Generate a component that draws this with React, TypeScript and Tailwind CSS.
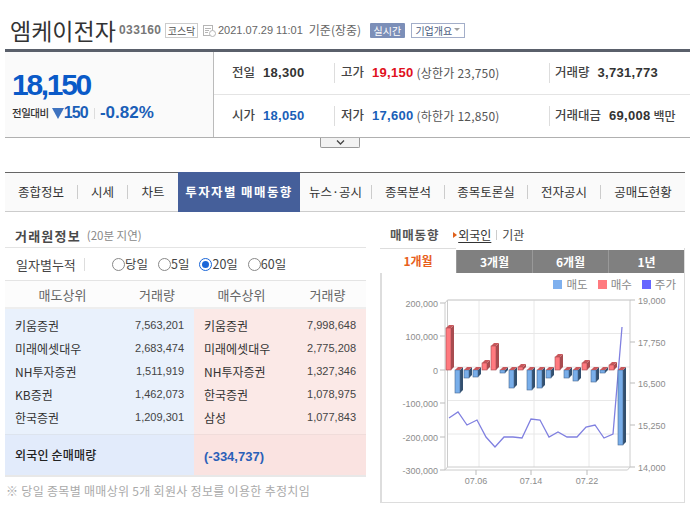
import React from 'react';

const KR = "font-['Noto_Sans_CJK_KR','Noto_Sans',sans-serif]";
const NUM = "font-['Liberation_Sans',Arial,sans-serif]";

const tabs = ['종합정보', '시세', '차트', '투자자별 매매동향', '뉴스·공시', '종목분석', '종목토론실', '전자공시', '공매도현황'];

const sellers = [
  ['키움증권', '7,563,201'],
  ['미래에셋대우', '2,683,474'],
  ['NH투자증권', '1,511,919'],
  ['KB증권', '1,462,073'],
  ['한국증권', '1,209,301'],
];
const buyers = [
  ['키움증권', '7,998,648'],
  ['미래에셋대우', '2,775,208'],
  ['NH투자증권', '1,327,346'],
  ['한국증권', '1,078,975'],
  ['삼성', '1,077,843'],
];

// top of the red bar and bottom of the blue bar for each day, in chart pixels
const bars: [number, number][] = [
  [328, 370], [370, 393], [370, 378], [370, 377], [363, 370],
  [346, 370], [370, 373], [370, 388], [367, 370], [370, 390],
  [370, 388], [370, 378], [357, 370], [370, 378], [370, 381],
  [363, 370], [370, 382], [370, 373], [365, 370], [370, 445],
];

const price = '449,418 458,412 467,425 477,420 486,437 495,447 504,437 513,437 522,438 531,419 540,420 549,437 558,432 567,437 577,437 586,427 595,425 604,438 613,434 622,327';

function Chart() {
  const leftLabels: [string, number][] = [['200,000', 303], ['100,000', 336], ['0', 370], ['-100,000', 403], ['-200,000', 437], ['-300,000', 470]];
  const rightLabels: [string, number][] = [['19,000', 300], ['17,750', 342], ['16,500', 383], ['15,250', 425], ['14,000', 467]];
  return (
    <svg className="block" width="302" height="208" viewBox="382 294 302 208">
      {[300, 333.5, 367, 400.5, 434].map((y) => (
        <line key={y} x1="447.5" x2="630" y1={y} y2={y} stroke="#e8e8e8" />
      ))}
      {[479, 534, 589].map((x) => (
        <line key={x} x1={x} x2={x} y1="300" y2="467" stroke="#e8e8e8" />
      ))}
      <path d="M630 300H447.5V467H630M445 303V470H627.5L630 467V300M445 303L447.5 300M445 470L447.5 467" fill="none" stroke="#cccccc" />
      {leftLabels.map(([t, y]) => (
        <g key={t}>
          <line x1="440" x2="445" y1={y} y2={y} stroke="#bbbbbb" />
          <text x="438" y={y + 3.5} textAnchor="end" fontSize="9" fill="#8c8c8c" fontFamily="Liberation Sans">{t}</text>
        </g>
      ))}
      {rightLabels.map(([t, y]) => (
        <g key={t}>
          <line x1="630" x2="635" y1={y} y2={y} stroke="#bbbbbb" />
          <text x="638" y={y + 3.5} fontSize="9" fill="#8c8c8c" fontFamily="Liberation Sans">{t}</text>
        </g>
      ))}
      {[[476, '07.06'], [531, '07.14'], [587, '07.22']].map(([x, t]) => (
        <g key={t}>
          <line x1={x} x2={x} y1="470" y2="475" stroke="#bbbbbb" />
          <text x={x} y="484" textAnchor="middle" fontSize="9" fill="#8c8c8c" fontFamily="Liberation Sans">{t}</text>
        </g>
      ))}
      <polyline points={price} fill="none" stroke="#8080e0" strokeWidth="1.3" />
      {bars.map(([top, bottom], i) => {
        const x = Math.round(446 + 9.05 * i);
        return (
          <g key={i} strokeWidth="0.6">
            {bottom > 370 && (
              <>
                <polygon points={`${x + 5},370 ${x + 8},367 ${x + 8},${bottom - 3} ${x + 5},${bottom}`} fill="#33506f" />
                <rect x={x} y="370" width="5" height={bottom - 370} fill="#78aeea" stroke="#4a6a92" />
              </>
            )}
            <polygon points={`${x + 5},${top} ${x + 8},${top - 3} ${x + 8},367 ${x + 5},370`} fill="#a84c50" />
            <polygon points={`${x},${top} ${x + 3},${top - 3} ${x + 8},${top - 3} ${x + 5},${top}`} fill="#c8585c" />
            {top < 370 && <rect x={x} y={top} width="5" height={370 - top} fill="#ff7a7f" stroke="#a84c50" />}
          </g>
        );
      })}
    </svg>
  );
}

function Stat({ label, value, color, extra, unit }: { label: string; value: string; color: string; extra?: string; unit?: string }) {
  return (
    <div className="flex items-center">
      <span className={`${KR} text-[12.5px] font-medium text-[#444] whitespace-nowrap`}>{label}</span>
      <span className={`${NUM} ml-[8px] text-[13px] font-bold tracking-[0.3px] ${color}`}>{value}</span>
      {extra && <span className={`${KR} ml-[3px] text-[12px] tracking-[0.2px] text-[#555] whitespace-nowrap`}>{extra}</span>}
      {unit && <span className={`${KR} ml-[3px] text-[12px] font-medium text-[#444]`}>{unit}</span>}
    </div>
  );
}

function TableRows({ rows, bg }: { rows: string[][]; bg: string }) {
  return (
    <div className={`flex flex-col pt-[5px] h-[125px] px-[10px] ${bg}`}>
      {rows.map(([name, qty]) => (
        <div key={name} className="flex items-center justify-between h-[23px]">
          <span className={`${KR} text-[12px] text-[#333]`}>{name}</span>
          <span className={`${NUM} text-[11px] text-[#444]`}>{qty}</span>
        </div>
      ))}
    </div>
  );
}

export default function App() {
  const tabWidths = ['w-[73px]', 'w-[50px]', 'w-[50px]', 'w-[122px]', 'w-[72px]', 'w-[73px]', 'w-[83px]', 'w-[73px]', 'w-[84px]'];
  return (
    <div className="w-[690px] h-[512px] overflow-hidden bg-white pl-[5px]">
      {/* title */}
      <div className="flex items-center h-[49px] pt-[11px] pl-[5px]">
        <h1 className={`${KR} text-[23px] leading-none text-[#333] w-[109px] whitespace-nowrap`}>엠케이전자</h1>
        <span className={`${NUM} text-[12px] font-bold tracking-[0.4px] text-[#777] w-[46px]`}>033160</span>
        <span className={`${KR} flex items-center justify-center w-[33px] h-[15px] border border-[#ccc] text-[10px] text-[#555]`}>코스닥</span>
        <svg className="ml-[5px]" width="13" height="13" viewBox="0 0 13 13" fill="none" stroke="#b5b5b5">
          <rect x="0.5" y="1.5" width="9" height="10" />
          <path d="M2 4.5h6M2 6.5h4M2 8.5h3" />
          <circle cx="9.5" cy="9.5" r="3" fill="#fff" />
        </svg>
        <span className={`${NUM} ml-[2px] text-[11px] text-[#666] whitespace-nowrap`}>2021.07.29 11:01</span>
        <span className={`${KR} ml-[6px] w-[52px] text-[12px] text-[#666] whitespace-nowrap`}>기준(장중)</span>
        <span className={`${KR} ml-[9px] flex items-center justify-center w-[35px] h-[15px] rounded-[1px] bg-[#7c8fb8] text-[10px] text-white`}>실시간</span>
        <span className={`${KR} ml-[6px] flex items-center justify-center gap-[2px] w-[54px] h-[15px] border border-[#a3aec9] text-[10px] text-[#4a5a80]`}>
          기업개요
          <svg width="6" height="4" viewBox="0 0 6 4"><path d="M0 0h6L3 3z" fill="#a0a0a0" /></svg>
        </span>
      </div>

      {/* quote summary */}
      <div className="flex h-[89px] border-t-[3px] border-b border-t-[#5a606b] border-b-[#b0b0b0]">
        <div className="w-[209px] bg-[#fafafa] border-r border-[#bbb] pl-[7px] pt-[18px]">
          <div className={`${NUM} text-[30px] leading-[30px] font-bold tracking-[-2.3px] text-[#0a5ac8]`}>18,150</div>
          <div className="flex items-center mt-[3px] h-[20px]">
            <span className={`${KR} text-[10.5px] font-medium tracking-[-0.5px] text-[#333] whitespace-nowrap`}>전일대비</span>
            <svg className="ml-[3px]" width="12" height="11" viewBox="0 0 12 11">
              <path d="M0 0h12L6 11z" fill="#3f73bf" />
            </svg>
            <span className={`${NUM} text-[16px] font-bold tracking-[-0.8px] text-[#1a5fb8]`}>150</span>
            <span className="ml-[6px] h-[11px] border-l border-[#ddd]" />
            <span className={`${NUM} ml-[5px] text-[17px] font-bold text-[#1a5fb8]`}>-0.82%</span>
          </div>
        </div>
        <div className="flex-1 grid grid-rows-2">
          <div className="flex items-center pl-[18px] border-b border-[#e4e4e4]">
            <div className="w-[103px] border-r border-[#ddd]"><Stat label="전일" value="18,300" color="text-[#333]" /></div>
            <div className="w-[214px] pl-[6px]"><Stat label="고가" value="19,150" color="text-[#e01020]" extra="(상한가 23,750)" /></div>
            <div className="border-l border-[#ddd] pl-[5px]"><Stat label="거래량" value="3,731,773" color="text-[#333]" /></div>
          </div>
          <div className="flex items-center pl-[18px]">
            <div className="w-[103px] border-r border-[#ddd]"><Stat label="시가" value="18,050" color="text-[#1a5fb8]" /></div>
            <div className="w-[214px] pl-[6px]"><Stat label="저가" value="17,600" color="text-[#1a5fb8]" extra="(하한가 12,850)" /></div>
            <div className="border-l border-[#ddd] pl-[5px]"><Stat label="거래대금" value="69,008" color="text-[#333]" unit="백만" /></div>
          </div>
        </div>
      </div>
      <div className="flex justify-center h-[34px] pr-[15px]">
        <button className="flex items-center justify-center w-[40px] h-[10px] border border-t-0 border-[#999] rounded-b-[2px] bg-[#f2f2f2]">
          <svg width="9" height="5" viewBox="0 0 9 5" fill="none" stroke="#444" strokeWidth="1.3"><path d="M1 0.5l3.5 3.5L8 0.5" /></svg>
        </button>
      </div>

      {/* tabs */}
      <div className="flex items-center w-[680px] h-[40px] border-t border-b border-t-[#666] border-b-[#ccc] bg-[#fafafa]">
        {tabs.map((t, i) => {
          const active = i === 3;
          return (
            <div key={t} className={`${KR} ${tabWidths[i]} flex items-center justify-center shrink-0 whitespace-nowrap ${active ? 'h-[40px] -my-px bg-[#455f9a] text-white font-bold text-[12.5px] tracking-[1.4px]' : 'h-[14px] text-[#333] text-[12.5px]'} ${i < 8 && i !== 2 && i !== 3 ? 'border-r border-[#ccc]' : ''}`}>
              {t}
            </div>
          );
        })}
      </div>

      <div className="flex">
        {/* left column */}
        <div className="w-[361px]">
          <div className="flex items-center h-[36px] pt-[12px] pl-[10px] border-b border-[#e4e4e4]">
            <span className={`${KR} text-[13px] font-bold tracking-[1.2px] text-[#4a4a4a]`}>거래원정보</span>
            <span className={`${KR} ml-[6px] text-[11.5px] text-[#888]`}>(20분 지연)</span>
          </div>
          <div className="flex items-center h-[33px] pl-[11px] border-b border-[#e4e4e4]">
            <span className={`${KR} text-[13px] text-[#444] w-[69px] h-[13px] leading-[13px] border-r border-[#ddd] whitespace-nowrap`}>일자별누적</span>
            {['당일', '5일', '20일', '60일'].map((t) => (
              <label key={t} className={`${KR} flex items-center text-[12.5px] text-[#444] whitespace-nowrap ${t === '당일' ? 'ml-[27px]' : 'ml-[10px]'}`}>
                <span className={`flex items-center justify-center w-[13px] h-[13px] rounded-full border ${t === '20일' ? 'border-[#1a66d8]' : 'border-[#888]'} bg-white`}>
                  {t === '20일' && <span className="w-[7px] h-[7px] rounded-full bg-[#1a66d8]" />}
                </span>
                {t}
              </label>
            ))}
          </div>
          <div className={`${KR} grid grid-cols-[189px_172px] h-[28px] pt-px border-b-2 border-[#eee] bg-[#fcfcfc] text-[13px] text-[#666]`}>
            <div className="flex items-center">
              <span className="w-[115px] text-center">매도상위</span>
              <span className="w-[74px] text-center">거래량</span>
            </div>
            <div className="flex items-center">
              <span className="w-[95px] text-center">매수상위</span>
              <span className="w-[77px] text-center">거래량</span>
            </div>
          </div>
          <div className="grid grid-cols-[189px_172px]">
            <TableRows rows={sellers} bg="bg-[#e9f1fc]" />
            <TableRows rows={buyers} bg="bg-[#fbe9e7]" />
            <div className={`${KR} flex items-center h-[41px] pl-[10px] border-t border-[#dde4ee] bg-[#e2ebfb] text-[12px] font-medium tracking-[0.2px] text-[#222]`}>외국인 순매매량</div>
            <div className={`${NUM} flex items-center h-[41px] pl-[10px] pt-[3px] border-t border-[#f0dcda] bg-[#fae3e1] text-[13px] font-bold text-[#2a5fb8]`}>(-334,737)</div>
          </div>
          <div className={`${KR} h-[27px] pt-[5px] pl-[1px] border-t-2 border-[#e8e8e8] text-[12px] tracking-[0.3px] text-[#aaa] whitespace-nowrap`}>※ 당일 종목별 매매상위 5개 회원사 정보를 이용한 추정치임</div>
        </div>

        {/* right column */}
        <div className="ml-[14px] w-[305px]">
          <div className="flex items-center h-[36px] pl-[10px] pt-[10px]">
            <span className={`${KR} text-[12.5px] font-bold tracking-[0.8px] text-[#555]`}>매매동향</span>
            <svg className="ml-[14px]" width="4" height="6" viewBox="0 0 4 6"><path d="M0 0l4 3-4 3z" fill="#e0601a" /></svg>
            <span className={`${KR} ml-[1px] text-[12px] text-[#333] underline underline-offset-2`}>외국인</span>
            <span className="ml-[5px] h-[10px] border-l border-[#ccc]" />
            <span className={`${KR} ml-[5px] text-[12px] text-[#444]`}>기관</span>
          </div>
          <div className="h-[255px] border-2 border-t-0 border-[#ddd] border-r-[1px] border-b-[1px]">
            <div className={`${KR} flex items-end -ml-[2px] h-[25px] text-[12px] font-bold`}>
              <div className="flex items-center justify-center w-[76px] h-[25px] border-t border-[#ddd] bg-white text-[#e8601c]">1개월</div>
              {['3개월', '6개월', '1년'].map((t) => (
                <div key={t} className="flex flex-1 items-center justify-center h-[23px] border-l border-[#999] bg-[#808080] text-white">{t}</div>
              ))}
            </div>
            <div className={`${KR} flex items-center justify-end gap-[10px] h-[21px] pt-[2px] pr-[8px] text-[11.5px] text-[#888]`}>
              <span className="flex items-center gap-[4px]"><i className="w-[9px] h-[9px] bg-[#7fb0ee]" />매도</span>
              <span className="flex items-center gap-[4px]"><i className="w-[9px] h-[9px] bg-[#ff7a7f]" />매수</span>
              <span className="flex items-center gap-[4px]"><i className="w-[9px] h-[9px] bg-[#6666ff]" />주가</span>
            </div>
            <Chart />
          </div>
        </div>
      </div>
    </div>
  );
}
